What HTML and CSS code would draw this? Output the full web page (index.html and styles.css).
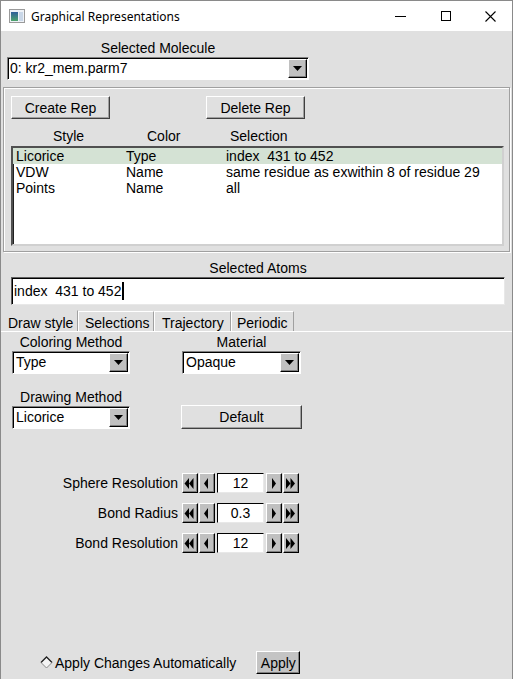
FILE: index.html
```html
<!DOCTYPE html>
<html>
<head>
<meta charset="utf-8">
<title>Graphical Representations</title>
<link rel="stylesheet" href="styles.css">
</head>
<body>
<div class="window">
  <div class="titlebar">
    <svg class="appicon" width="16" height="14" viewBox="0 0 16 14">
      <defs>
        <linearGradient id="ig" x1="0" y1="0" x2="0" y2="1">
          <stop offset="0" stop-color="#2f5f9a"/>
          <stop offset="1" stop-color="#4ea56c"/>
        </linearGradient>
      </defs>
      <rect x="0.5" y="0.5" width="15" height="13" fill="#eef2f7" stroke="#9a9a9a"/>
      <rect x="2" y="3" width="7" height="9" fill="url(#ig)"/>
      <rect x="10" y="3" width="4" height="9" fill="#c9d7e8"/>
    </svg>
    <span class="title">Graphical Representations</span>
    <div class="controls">
      <span class="ctl"><svg width="11" height="11" viewBox="0 0 11 11"><line x1="0" y1="5.5" x2="11" y2="5.5" stroke="#000" stroke-width="1"/></svg></span>
      <span class="ctl"><svg width="10" height="10" viewBox="0 0 10 10"><rect x="0.5" y="0.5" width="9" height="9" fill="none" stroke="#000" stroke-width="1"/></svg></span>
      <span class="ctl"><svg width="11" height="11" viewBox="0 0 11 11"><path d="M0.5 0.5L10.5 10.5M10.5 0.5L0.5 10.5" stroke="#000" stroke-width="1.1" fill="none"/></svg></span>
    </div>
  </div>

  <div class="body">
    <div class="mol">
      <div class="lbl">Selected Molecule</div>
      <div class="combo">
        <span class="val">0: kr2_mem.parm7</span>
        <span class="arrow"><svg width="9" height="5" viewBox="0 0 9 5"><polygon points="0,0 9,0 4.5,5" fill="#000"/></svg></span>
      </div>
    </div>

    <div class="frame">
      <div class="btnrow">
        <button class="btn rep">Create Rep</button>
        <button class="btn rep del">Delete Rep</button>
      </div>
      <div class="hdr"><span class="h1">Style</span><span class="h2">Color</span><span>Selection</span></div>
      <div class="listbox">
        <div class="row selrow"><span class="c1">Licorice</span><span class="c2">Type</span><span class="c3">index  431 to 452</span></div>
        <div class="row"><span class="c1">VDW</span><span class="c2">Name</span><span class="c3">same residue as exwithin 8 of residue 29</span></div>
        <div class="row"><span class="c1">Points</span><span class="c2">Name</span><span class="c3">all</span></div>
      </div>
    </div>

    <div class="atoms">
      <div class="lbl">Selected Atoms</div>
      <div class="entry"><span class="etext">index  431 to 452</span><span class="caret"></span></div>
    </div>

    <div class="tabs">
      <span class="tab t1 active">Draw style</span>
      <span class="tab t2">Selections</span>
      <span class="tab t3">Trajectory</span>
      <span class="tab t4">Periodic</span>
    </div>

    <div class="panel">
      <div class="prow">
        <div class="pcol">
          <div class="lbl">Coloring Method</div>
          <div class="combo small">
            <span class="val">Type</span>
            <span class="arrow"><svg width="9" height="5" viewBox="0 0 9 5"><polygon points="0,0 9,0 4.5,5" fill="#000"/></svg></span>
          </div>
        </div>
        <div class="pcol right">
          <div class="lbl">Material</div>
          <div class="combo small mat">
            <span class="val">Opaque</span>
            <span class="arrow"><svg width="9" height="5" viewBox="0 0 9 5"><polygon points="0,0 9,0 4.5,5" fill="#000"/></svg></span>
          </div>
        </div>
      </div>
      <div class="prow second">
        <div class="pcol">
          <div class="lbl lbl2">Drawing Method</div>
          <div class="combo small">
            <span class="val">Licorice</span>
            <span class="arrow"><svg width="9" height="5" viewBox="0 0 9 5"><polygon points="0,0 9,0 4.5,5" fill="#000"/></svg></span>
          </div>
        </div>
        <div class="pcol right bottom">
          <button class="btn default">Default</button>
        </div>
      </div>

      <div class="spinners">
        <div class="spin">
          <span class="slabel">Sphere Resolution</span>
          <span class="sbtn"><svg width="14" height="18" viewBox="0 0 14 18"><polygon points="1.5,9.5 6,4 6,15" fill="#000"/><polygon points="6,9.5 10.5,4 10.5,15" fill="#000"/></svg></span>
          <span class="sbtn g1"><svg width="14" height="18" viewBox="0 0 14 18"><polygon points="4,9.5 8,4 8,15" fill="#000"/></svg></span>
          <span class="sval">12</span>
          <span class="sbtn"><svg width="14" height="18" viewBox="0 0 14 18"><polygon points="5,4 5,15 9,9.5" fill="#000"/></svg></span>
          <span class="sbtn g1"><svg width="14" height="18" viewBox="0 0 14 18"><polygon points="2,4 2,15 6.5,9.5" fill="#000"/><polygon points="6.5,4 6.5,15 11,9.5" fill="#000"/></svg></span>
        </div>
        <div class="spin">
          <span class="slabel">Bond Radius</span>
          <span class="sbtn"><svg width="14" height="18" viewBox="0 0 14 18"><polygon points="1.5,9.5 6,4 6,15" fill="#000"/><polygon points="6,9.5 10.5,4 10.5,15" fill="#000"/></svg></span>
          <span class="sbtn g1"><svg width="14" height="18" viewBox="0 0 14 18"><polygon points="4,9.5 8,4 8,15" fill="#000"/></svg></span>
          <span class="sval">0.3</span>
          <span class="sbtn"><svg width="14" height="18" viewBox="0 0 14 18"><polygon points="5,4 5,15 9,9.5" fill="#000"/></svg></span>
          <span class="sbtn g1"><svg width="14" height="18" viewBox="0 0 14 18"><polygon points="2,4 2,15 6.5,9.5" fill="#000"/><polygon points="6.5,4 6.5,15 11,9.5" fill="#000"/></svg></span>
        </div>
        <div class="spin">
          <span class="slabel">Bond Resolution</span>
          <span class="sbtn"><svg width="14" height="18" viewBox="0 0 14 18"><polygon points="1.5,9.5 6,4 6,15" fill="#000"/><polygon points="6,9.5 10.5,4 10.5,15" fill="#000"/></svg></span>
          <span class="sbtn g1"><svg width="14" height="18" viewBox="0 0 14 18"><polygon points="4,9.5 8,4 8,15" fill="#000"/></svg></span>
          <span class="sval">12</span>
          <span class="sbtn"><svg width="14" height="18" viewBox="0 0 14 18"><polygon points="5,4 5,15 9,9.5" fill="#000"/></svg></span>
          <span class="sbtn g1"><svg width="14" height="18" viewBox="0 0 14 18"><polygon points="2,4 2,15 6.5,9.5" fill="#000"/><polygon points="6.5,4 6.5,15 11,9.5" fill="#000"/></svg></span>
        </div>
      </div>

      <div class="applyrow">
        <svg class="diamond" width="13" height="13" viewBox="0 0 13 13">
          <polygon points="6.5,1 12,6.5 6.5,12 1,6.5" fill="#f4f4f4"/>
          <path d="M1 6.5L6.5 1L12 6.5" stroke="#202020" stroke-width="1.3" fill="none"/>
          <path d="M1 6.5L6.5 12L12 6.5" stroke="#8a8a8a" stroke-width="1" fill="none"/>
        </svg>
        <span class="autotext">Apply Changes Automatically</span>
        <button class="btn apply">Apply</button>
      </div>
    </div>
  </div>
</div>
</body>
</html>
```

FILE: styles.css
```css
* { box-sizing: border-box; }
html, body { margin: 0; padding: 0; }
body {
  width: 513px;
  height: 679px;
  overflow: hidden;
  background: #e0e0e0;
  font-family: "Liberation Sans", Arial, sans-serif;
  font-size: 14px;
  color: #000;
}
.window {
  width: 513px;
  height: 679px;
  border: 1px solid #8a8a8a;
  border-bottom: 0;
  background: #e0e0e0;
  display: flex;
  flex-direction: column;
}

/* title bar */
.titlebar {
  flex: none;
  height: 30px;
  background: #fff;
  display: flex;
  align-items: center;
}
.appicon { margin-left: 8px; flex: none; }
.title {
  margin-left: 6px;
  font-family: "Noto Sans", sans-serif;
  font-size: 12px;
  color: #000;
}
.controls {
  margin-left: auto;
  margin-right: -1px;
  display: flex;
  height: 100%;
}
.ctl {
  width: 45px;
  display: flex;
  align-items: center;
  justify-content: center;
}

/* body */
.body {
  flex: 1;
  display: flex;
  flex-direction: column;
  align-items: flex-start;
}
.lbl {
  height: 16px;
  line-height: 16px;
  text-align: center;
  white-space: nowrap;
}
.mol {
  margin: 9px 0 0 6px;
  width: 302px;
}
.mol .combo { margin-top: 1px; }

.combo {
  display: flex;
  height: 23px;
  background: #fff;
  border: 1px solid;
  border-color: #808080 #ffffff #ffffff #808080;
  box-shadow: inset 1px 1px 0 #000;
}
.combo .val {
  flex: 1;
  padding-left: 2px;
  line-height: 21px;
  white-space: pre;
}
.combo.small .val { padding-left: 3px; }
.arrow {
  flex: none;
  width: 19px;
  margin: 1px 1px 1px 0;
  background: #c0c0c0;
  border: 1px solid;
  border-color: #ffffff #000 #000 #ffffff;
  box-shadow: inset -1px -1px 0 #808080;
  display: flex;
  align-items: center;
  justify-content: center;
}

/* reps frame */
.frame {
  margin: 7px 0 0 2px;
  width: 507px;
  height: 165px;
  border: 1px solid #a0a0a0;
  box-shadow: inset 1px 1px 0 #fff, 1px 1px 0 #fff;
}
.btnrow {
  display: flex;
  padding: 8px 0 0 7px;
}
.btn {
  font: inherit;
  color: #000;
  padding: 0;
  background: #e0e0e0;
  border: 1px solid;
  border-color: #ffffff #404040 #404040 #ffffff;
  box-shadow: inset -1px -1px 0 #a0a0a0;
}
.rep { width: 99px; height: 23px; }
.del { margin-left: 96px; }
.hdr {
  display: flex;
  margin-top: 9px;
  padding-left: 49px;
  height: 16px;
  line-height: 16px;
}
.h1 { width: 94px; }
.h2 { width: 83px; }
.listbox {
  margin: 2px 0 0 7px;
  width: 493px;
  height: 100px;
  background: #fff;
  border: 2px solid;
  border-color: #505050 #d0d0d0 #d0d0d0 #505050;
  box-shadow: inset 1px 1px 0 #202020;
}
.row {
  display: flex;
  height: 16px;
  line-height: 16px;
  padding-left: 3px;
  white-space: pre;
}
.selrow { background: #d4e2d4; }
.c1 { width: 110px; }
.c2 { width: 100px; }

/* selected atoms */
.atoms {
  margin: 8px 0 0 10px;
  width: 494px;
}
.entry {
  margin-top: 1px;
  height: 28px;
  background: #fff;
  border: 1px solid;
  border-color: #606060 #e8e8e8 #e8e8e8 #606060;
  box-shadow: inset 1px 1px 0 #000;
  display: flex;
  align-items: center;
  padding-left: 2px;
}
.etext { white-space: pre; line-height: 16px; }
.caret {
  width: 2px;
  height: 18px;
  background: #000;
  margin-left: 1px;
}

/* tabs */
.tabs {
  margin-top: 6px;
  width: 100%;
  display: flex;
  height: 21px;
  padding-left: 3px;
  border-bottom: 1px solid #fff;
}
.tab {
  height: 20px;
  padding-top: 3px;
  line-height: 16px;
  border-top: 1px solid #fff;
  border-right: 1px solid #a0a0a0;
  white-space: nowrap;
}
.t1 { width: 74px; padding-left: 4px; height: 21px; background: #e0e0e0; border-top-color: #e0e0e0; margin-top: -1px; padding-top: 4px; }
.t2 { width: 76px; padding-left: 6px; border-left: 1px solid #fff; }
.t3 { width: 77px; padding-left: 7px; border-left: 1px solid #fff; }
.t4 { width: 63px; padding-left: 5px; border-left: 1px solid #fff; }

/* panel */
.panel {
  width: 100%;
  flex: 1;
  padding-top: 2px;
  display: flex;
  flex-direction: column;
}
.prow {
  display: flex;
  margin-left: 11px;
}
.prow.second { margin-top: 15px; }
.pcol {
  width: 118px;
  display: flex;
  flex-direction: column;
}
.pcol .lbl { margin-bottom: 1px; }
.pcol.right {
  width: 121px;
  margin-left: 51px;
}
.pcol.bottom { justify-content: flex-end; }
.combo.mat { margin-left: 1px; width: 119px; }
.default { width: 121px; height: 24px; }

/* spinners */
.spinners {
  margin-top: 44px;
  display: flex;
  flex-direction: column;
  gap: 10px;
}
.spin {
  display: flex;
  align-items: center;
  height: 20px;
}
.slabel {
  width: 177px;
  text-align: right;
  line-height: 16px;
  margin-right: 4px;
  white-space: nowrap;
}
.sbtn {
  width: 16px;
  height: 20px;
  background: #c0c0c0;
  border: 1px solid;
  border-color: #ffffff #000 #000 #ffffff;
  box-shadow: inset -1px -1px 0 #808080;
  display: flex;
}
.sbtn.g1 { margin-left: 1px; }
.sval {
  width: 47px;
  height: 20px;
  margin: 0 2px;
  background: #fff;
  border: 1px solid;
  border-color: #000 #e8e8e8 #e8e8e8 #000;
  text-align: center;
  line-height: 18px;
}

/* apply */
.applyrow {
  margin-top: 98px;
  display: flex;
  align-items: center;
  padding-left: 39px;
  height: 23px;
}
.diamond { flex: none; }
.autotext { margin-left: 2px; white-space: nowrap; line-height: 16px; }
.apply {
  margin-left: 20px;
  width: 44px;
  height: 23px;
  background: #c4c4c4;
  border-color: #ffffff #000 #000 #ffffff;
  box-shadow: inset -1px -1px 0 #808080;
}
```
